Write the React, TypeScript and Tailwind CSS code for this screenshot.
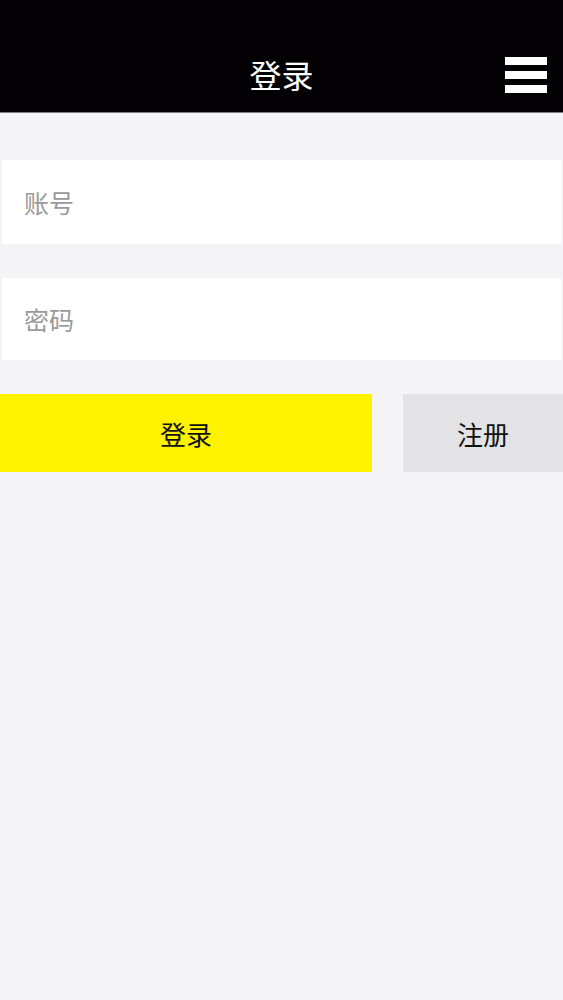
export default function App() {
  return (
    <div
      className="min-h-[1000px] w-full bg-[#f4f3f5]"
      style={{ fontFamily: '"Noto Sans CJK SC", "Noto Sans", sans-serif' }}
    >
      {/* Header */}
      <header className="relative flex h-[113px] items-end justify-center border-b border-[#7a797b] bg-[#030104] pb-[14px]">
        <h1 className="text-[32px] leading-[48px] font-normal text-white">登录</h1>
        <button className="absolute right-[16px] top-[57px] flex w-[42px] flex-col gap-[6px]">
          <span className="block h-[8px] w-full bg-white" />
          <span className="block h-[8px] w-full bg-white" />
          <span className="block h-[8px] w-full bg-white" />
        </button>
      </header>

      {/* Form */}
      <div className="flex flex-col px-[2px] pt-[47px]">
        <input
          type="text"
          placeholder="账号"
          className="h-[84px] w-full bg-white px-[22px] text-[25px] text-[#333] outline-none placeholder:text-[#9a999b]"
        />
        <input
          type="password"
          placeholder="密码"
          className="mt-[34px] h-[82px] w-full bg-white px-[22px] text-[25px] text-[#333] outline-none placeholder:text-[#9a999b]"
        />
      </div>

      <div className="mt-[34px] flex justify-between">
        <button className="h-[78px] w-[372px] bg-[#fff200] text-[26px] text-[#111]">登录</button>
        <button className="h-[78px] w-[160px] bg-[#e3e2e4] text-[26px] text-[#111]">注册</button>
      </div>
    </div>
  );
}
